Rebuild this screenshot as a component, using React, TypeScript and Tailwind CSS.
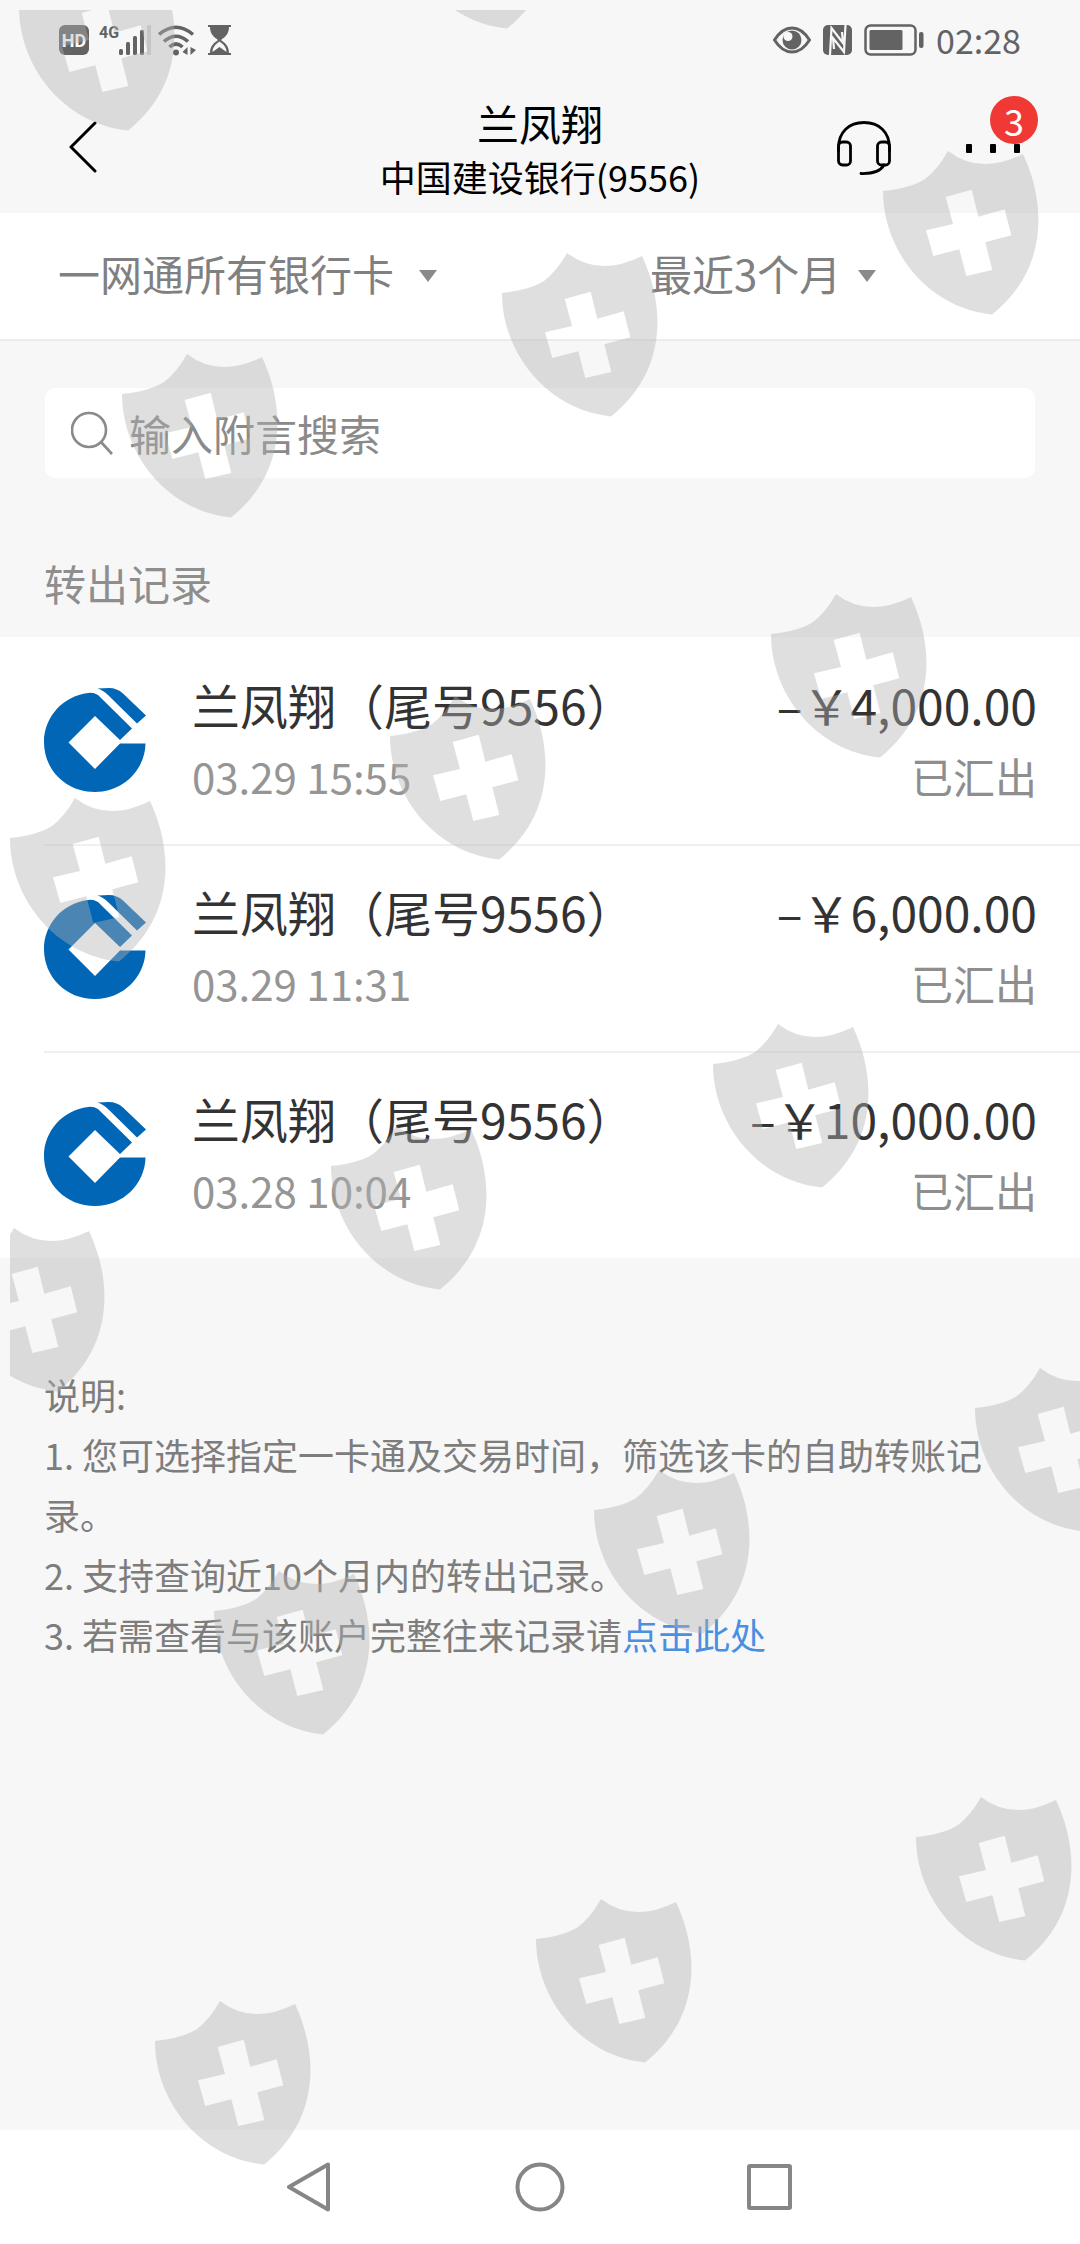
import type { ReactNode } from "react";

const records = [
  { name: "兰凤翔（尾号9556）", time: "03.29 15:55", amount: "–￥4,000.00", status: "已汇出" },
  { name: "兰凤翔（尾号9556）", time: "03.29 11:31", amount: "–￥6,000.00", status: "已汇出" },
  { name: "兰凤翔（尾号9556）", time: "03.28 10:04", amount: "–￥10,000.00", status: "已汇出" },
];

// Top-left corner of every shield in the overlay
const shields = [
  [19, -33],
  [398, -135],
  [883, 151],
  [502, 253],
  [122, 354],
  [771, 594],
  [390, 696],
  [10, 798],
  [713, 1024],
  [331, 1126],
  [-51, 1228],
  [975, 1368],
  [594, 1470],
  [214, 1571],
  [916, 1797],
  [536, 1899],
  [155, 2001],
];

const StatusBar = () => (
  <div className="flex h-20 items-center justify-between pl-[59px] pr-[59px] text-[#636363]">
    <div className="flex items-center">
      <span className="flex h-[30px] w-[30px] items-center justify-center rounded-md bg-[#636363] font-[Roboto,sans-serif] text-[18px] font-bold text-white">
        HD
      </span>
      <span className="ml-2.5 self-start font-[Roboto,sans-serif] text-[16px] font-bold leading-4">4G</span>
      <svg className="h-[30px] w-[33px]" viewBox="0 0 33 30" fill="currentColor">
        <rect x="0" y="24" width="4" height="6" rx="1.5" />
        <rect x="7" y="17" width="4" height="13" rx="1.5" />
        <rect x="14" y="11" width="4" height="19" rx="1.5" />
        <rect x="21" y="5" width="4" height="25" rx="1.5" />
        <rect x="28" y="0" width="4" height="30" rx="1.5" opacity="0.25" />
      </svg>
      <svg className="ml-1.5 h-[31px] w-[39px]" viewBox="0 0 39 31" fill="none" stroke="currentColor" strokeWidth="3.6">
        <path d="M1 9.5Q18 -5 35 9.5" />
        <path d="M6 16.500Q18 6 30 16.500" />
        <path d="M11.500 22Q18 16 24.500 22" />
        <circle cx="18" cy="27.500" r="3" fill="currentColor" stroke="none" />
        <path d="M29.500 22V30L24.500 27zM32.500 22V30L38 25z" fill="currentColor" stroke="none" />
      </svg>
      <svg className="ml-[11px] h-[30px] w-[23px]" viewBox="0 0 23 30" fill="currentColor">
        <path d="M0 0H23V2H21C21 9 17 12 13 15C17 18 21 21 21 28H23V30H0V28H2C2 21 6 18 10 15C6 12 2 9 2 2H0z" />
        <path d="M4.500 27C4.500 22 8 19 11.500 16.500C15 19 18.500 22 18.500 27L11.500 22z" fill="#f7f7f7" />
      </svg>
    </div>
    <div className="flex items-center">
      <svg className="h-[28px] w-[38px]" viewBox="0 0 38 28">
        <path d="M1.500 14Q9 2 19 2T36.500 14Q29 26 19 26T1.500 14z" fill="none" stroke="currentColor" strokeWidth="3" />
        <circle cx="19" cy="14" r="9.500" fill="currentColor" />
        <circle cx="15" cy="10.500" r="4.500" fill="#f7f7f7" />
      </svg>
      <svg className="ml-3 h-[30px] w-[29px]" viewBox="0 0 29 30">
        <rect width="29" height="30" rx="5" fill="currentColor" />
        <path d="M7 30L8.500 3L20 18L19 7M22.500 0L21 27L10 13L11 24" fill="none" stroke="#f7f7f7" strokeWidth="2.200" />
      </svg>
      <svg className="ml-3 h-[32px] w-[60px]" viewBox="0 0 60 32">
        <rect x="1.500" y="1.500" width="50" height="29" rx="5" fill="none" stroke="currentColor" strokeWidth="2.500" />
        <rect x="5.500" y="6" width="33" height="20" rx="1.500" fill="currentColor" />
        <rect x="55" y="8" width="4.500" height="16" rx="2" fill="currentColor" />
      </svg>
      <span className="ml-3 text-[34px] leading-10">02:28</span>
    </div>
  </div>
);

const Header = () => (
  <header className="grid h-[133px] grid-cols-3 items-center text-black">
    <button aria-label="返回" className="ml-[68px] justify-self-start">
      <svg className="h-[52px] w-[30px]" viewBox="0 0 30 52" fill="none" stroke="currentColor" strokeWidth="3" strokeLinecap="round" strokeLinejoin="round">
        <path d="M27 2L3 26L27 50" />
      </svg>
    </button>
    <div className="whitespace-nowrap pt-1 text-center">
      <h1 className="text-[42px] leading-[54px]">兰凤翔</h1>
      <p className="text-[36px] leading-[52px]">中国建设银行(9556)</p>
    </div>
    <div className="mr-[60px] flex items-center gap-[74px] justify-self-end">
      <button aria-label="客服">
        <svg className="h-[56px] w-[56px]" viewBox="0 0 56 56" fill="none" stroke="currentColor" strokeWidth="2.800" strokeLinecap="round">
          <path d="M2.500 32V29C2.500 13 13 3.500 28 3.500S53.500 13 53.500 29V32" />
          <rect x="2.500" y="23" width="12" height="23" rx="4" />
          <rect x="41.500" y="23" width="12" height="23" rx="4" />
          <path d="M48 46Q43 55 25 54.500" />
        </svg>
      </button>
      <button aria-label="更多，3条消息" className="relative flex gap-[18px] pb-5 pt-6">
        <i className="h-[9px] w-1.5 rounded-[1px] bg-black" />
        <i className="h-[9px] w-1.5 rounded-[1px] bg-black" />
        <i className="h-[9px] w-1.5 rounded-[1px] bg-black" />
        <span className="absolute -right-[18px] -top-6 flex h-12 w-12 items-center justify-center rounded-full bg-[#f03935] text-[36px] leading-none text-white">
          3
        </span>
      </button>
    </div>
  </header>
);

const Filter = ({ label, value, className }: { label: string; value: string; className: string }) => (
  <label className="flex items-center">
    <select
      aria-label={label}
      className={`mb-1.5 appearance-none bg-transparent text-[42px] leading-[60px] text-[#808080] ${className}`}
    >
      <option>{value}</option>
    </select>
    <svg className="h-3 w-[18px]" viewBox="0 0 18 12" fill="#8a8a8a">
      <path d="M0 0H18L9 12z" />
    </svg>
  </label>
);

const BankLogo = () => (
  <svg className="h-[104px] w-[102px] shrink-0" viewBox="0 0 102 104" role="img" aria-label="中国建设银行">
    <g fill="#0066b5">
      <path d="M44 5Q49 4 54 7L88 40.500L76 52L51 28L24.500 54.500L51 81L76 55.500H101.500C101 82 79 104 51 104C22 104 0 82 0 54C0 29 19 8 44 5z" />
      <path d="M53.500 0.500Q60 0 65 0Q73 0 79 5.500L102 27.500L93 35.500L64 7Q59 2 53.500 0.500z" />
    </g>
  </svg>
);

const NavButton = ({ label, children }: { label: string; children: ReactNode }) => (
  <button aria-label={label}>
    <svg className="h-[50px] w-[50px]" viewBox="0 0 50 50" fill="none" stroke="#868686" strokeWidth="4" strokeLinejoin="round">
      {children}
    </svg>
  </button>
);

const Shields = () => (
  <div className="pointer-events-none absolute bottom-0 left-2.5 right-0 top-2.5 overflow-hidden" aria-hidden="true">
    {shields.map(([x, y]) => (
      <svg
        key={`${x},${y}`}
        className="absolute h-[164px] w-[157px] opacity-[0.41]"
        style={{ left: x - 10, top: y - 10 }}
        viewBox="0 0 157 164"
        fill="#b3b3b3"
        fillRule="evenodd"
      >
        <path d="M65 0Q82 13 102 13Q120 13 140 3C163 52 166 118 109 163.500C45 157 0 100 0 40Q28 37 42 28Q55 18 65 0zM62.700 46L70 73L43 79.300L50.300 105L76.300 98.300L83.300 125L109.300 119L102.300 91.300L128.300 84.300L121.700 58.300L95.300 65.700L88.700 38.700z" />
      </svg>
    ))}
  </div>
);

const App = () => {
  return (
    <div className="relative flex min-h-screen flex-col bg-[#f7f7f7] font-['Noto_Sans_CJK_SC',sans-serif]">
      <StatusBar />
      <Header />

      {/* Filters */}
      <div className="grid h-[128px] grid-cols-[592px_1fr] items-center border-b-2 border-[#ececec] bg-white pl-[58px]">
        <Filter label="银行卡" value="一网通所有银行卡" className="pr-6" />
        <Filter label="时间范围" value="最近3个月" className="pr-4" />
      </div>

      {/* Search */}
      <label className="mx-[45px] mt-[47px] flex h-[90px] items-center gap-4 rounded-[10px] bg-white px-[26px]">
        <svg className="h-11 w-[42px] shrink-0" viewBox="0 0 42 44" fill="none" stroke="#8a8a8a" strokeWidth="2.600">
          <circle cx="18" cy="19" r="17" />
          <path d="M30 31L41 43" />
        </svg>
        <input
          type="search"
          aria-label="输入附言搜索"
          placeholder="输入附言搜索"
          className="min-w-0 flex-1 bg-transparent text-[42px] leading-[60px] outline-none placeholder:text-[#8a8a8a]"
        />
      </label>

      <h2 className="mx-11 mb-6 mt-[75px] text-[42px] leading-[60px] text-[#8e8e8e]">转出记录</h2>

      {/* Transfer list */}
      <ul id="records" className="bg-white pl-11">
        {records.map((record) => (
          <li
            key={record.time}
            className="flex h-[207px] items-center border-t-2 border-[#f0f0f0] pb-1 pr-[43px] first:border-transparent"
          >
            <BankLogo />
            <div className="ml-[46px] flex-1 whitespace-nowrap">
              <p className="text-[48px] leading-[72px] text-[#333]">{record.name}</p>
              <p className="text-[42px] leading-[72px] text-[#959595]">{record.time}</p>
            </div>
            <div className="whitespace-nowrap text-right">
              <p className="text-[48px] leading-[72px] text-[#333]">{record.amount}</p>
              <p className="text-[42px] leading-[72px] text-[#8e8e8e]">{record.status}</p>
            </div>
          </li>
        ))}
      </ul>

      {/* Notes */}
      <section className="mx-11 mt-[106px] text-[36px] leading-[60px] text-[#7d7d7d]">
        <p>说明:</p>
        <p>1. 您可选择指定一卡通及交易时间，筛选该卡的自助转账记录。</p>
        <p>2. 支持查询近10个月内的转出记录。</p>
        <p>
          3. 若需查看与该账户完整往来记录请
          <a href="#records" className="text-[#4a8fe0]">
            点击此处
          </a>
        </p>
      </section>

      <nav className="mt-auto flex h-[114px] items-center justify-center gap-[180px] bg-white">
        <NavButton label="后退">
          <path d="M4 25L43 2.500V47.500z" />
        </NavButton>
        <NavButton label="主页">
          <circle cx="25" cy="25" r="22.500" />
        </NavButton>
        <NavButton label="最近任务">
          <rect x="4" y="4" width="41" height="42" rx="1" />
        </NavButton>
      </nav>

      <Shields />
    </div>
  );
};

export default App;
